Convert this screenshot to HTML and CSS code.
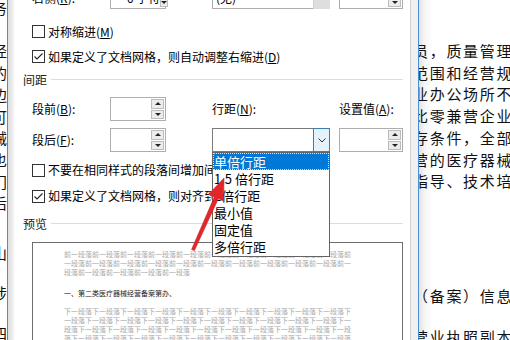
FILE: index.html
```html
<!DOCTYPE html>
<html>
<head>
    <meta charset="utf-8">
    <title>段落 - 行距</title>
    <link rel="stylesheet" href="styles.css">
</head>
<body>
<div class="screen">

    <div class="doc-left">
        <div class="doc-block">
            <div class="doc-line">务</div>
            <div class="doc-line">&nbsp;</div>
            <div class="doc-line">经</div>
            <div class="doc-line">的</div>
            <div class="doc-line">边</div>
            <div class="doc-line">可</div>
            <div class="doc-line">械</div>
            <div class="doc-line">也</div>
            <div class="doc-line">门</div>
            <div class="doc-line">后</div>
        </div>
        <div class="doc-block wide">
            <div class="doc-line">山</div>
            <div class="doc-line">涉</div>
            <div class="doc-line">四</div>
        </div>
    </div>
    <div class="doc-edge"></div>

    <div class="dialog">
        <div class="frame-left"></div>
        <div class="dialog-body">

            <div class="field-grid cut-row">
                <span class="label">右侧(<u>R</u>):</span>
                <div class="spin-box">
                    <span class="value indent">0 字符</span>
                    <div class="spinner"><span class="spin-btn up"></span><span class="spin-btn down"></span></div>
                </div>
                <div class="select-box plain">
                    <span class="value">(无)</span>
                    <span class="select-btn gray"></span>
                </div>
                <div class="spin-box narrow">
                    <div class="spinner"><span class="spin-btn up"></span><span class="spin-btn down"></span></div>
                </div>
            </div>

            <div class="check-row">
                <span class="checkbox"></span>
                <span>对称缩进(<u>M</u>)</span>
            </div>
            <div class="check-row">
                <span class="checkbox"><svg width="11" height="11" viewBox="0 0 11 11"><polyline points="1.5,5.5 4,8 9.5,2.5" fill="none" stroke="#222" stroke-width="1.1"/></svg></span>
                <span>如果定义了文档网格，则自动调整右缩进(<u>D</u>)</span>
            </div>

            <div class="group-title"><span>间距</span></div>

            <div class="field-grid spacing">
                <span class="label">段前(<u>B</u>):</span>
                <div class="spin-box">
                    <div class="spinner"><span class="spin-btn up"></span><span class="spin-btn down"></span></div>
                </div>
                <span class="label">行距(<u>N</u>):</span>
                <span class="label">设置值(<u>A</u>):</span>

                <span class="label">段后(<u>F</u>):</span>
                <div class="spin-box">
                    <div class="spinner"><span class="spin-btn up"></span><span class="spin-btn down"></span></div>
                </div>
                <div class="select-box open">
                    <span class="value"></span>
                    <span class="select-btn active">
                        <svg width="8" height="5" viewBox="0 0 8 5"><polyline points="0.5,0.5 4,4 7.5,0.5" fill="none" stroke="#333" stroke-width="1"/></svg>
                    </span>
                    <ul class="dropdown">
                        <li class="selected">单倍行距</li>
                        <li>1.5 倍行距</li>
                        <li>2倍行距</li>
                        <li>最小值</li>
                        <li>固定值</li>
                        <li>多倍行距</li>
                    </ul>
                </div>
                <div class="spin-box narrow">
                    <div class="spinner"><span class="spin-btn up"></span><span class="spin-btn down"></span></div>
                </div>
            </div>

            <div class="check-row tall">
                <span class="checkbox"></span>
                <span>不要在相同样式的段落间增加间距(<u>C</u>)</span>
            </div>
            <div class="check-row tall">
                <span class="checkbox"><svg width="11" height="11" viewBox="0 0 11 11"><polyline points="1.5,5.5 4,8 9.5,2.5" fill="none" stroke="#222" stroke-width="1.1"/></svg></span>
                <span>如果定义了文档网格，则对齐到网格(<u>W</u>)</span>
            </div>

            <div class="group-title preview-title"><span>预览</span></div>

            <div class="preview">
                <div class="prev-para">
                    <span>前一段落前一段落前一段落前一段落前一段落前一段落前一段落前一段落前一段落前一段落前</span>
                    <span>一段落前一段落前一段落前一段落前一段落前一段落前一段落前一段落前一段落前一段落前一</span>
                    <span>段落前一段落前一段落前一段落前一段落</span>
                </div>
                <div class="prev-para main">
                    <span>一、第二类医疗器械经营备案第办、</span>
                </div>
                <div class="prev-para after">
                    <span>下一段落下一段落下一段落下一段落下一段落下一段落下一段落下一段落下一段落下一段落下</span>
                    <span>一段落下一段落下一段落下一段落下一段落下一段落下一段落下一段落下一段落下一段落下一</span>
                    <span>段落下一段落下一段落下一段落下一段落下一段落下一段落下一段落下一段落下一段落下一段</span>
                    <span>落下一段落下一段落下一段落下一段落下一段落下一段落下一段落下一段落下一段落下一段落</span>
                </div>
            </div>

        </div>
        <div class="frame-right"></div>
    </div>
    <div class="doc-edge"></div>

    <div class="doc-right">
        <div class="doc-text">
            <div>员，质量管理</div>
            <div>范围和经营规</div>
            <div>业办公场所不</div>
            <div>比零兼营企业</div>
            <div>存条件，全部</div>
            <div>营的医疗器械</div>
            <div>指导、技术培</div>
        </div>
        <div class="doc-text wide">
            <div>（备案）信息</div>
            <div>营业执照副本</div>
        </div>
    </div>

    <svg class="callout" width="510" height="340" viewBox="0 0 510 340">
        <polygon points="224,178 223.5,201 218.3,198.8 194.4,250.6 191.6,249.4 214.3,197 208.5,194.5" fill="#e3262c" stroke="#c81e22" stroke-width="0.6" stroke-linejoin="round"/>
    </svg>
</div>
</body>
</html>
```

FILE: styles.css
```css
* { box-sizing: border-box; }
body { margin: 0; font-family: "Noto Sans CJK SC", "Microsoft YaHei", sans-serif; font-size: 12px; color: #000; background: #fff; }
u { text-decoration-thickness: 1px; text-underline-offset: 1px; }

.screen { position: relative; display: flex; width: 510px; height: 340px; overflow: hidden; background: #fff; }

/* document behind the dialog */
.doc-left { width: 7px; overflow: hidden; font-size: 15px; color: #111; }
.doc-left .doc-block { margin-top: -3px; line-height: 21.7px; }
.doc-left .doc-block.wide { margin-top: 19px; line-height: 40px; }
.doc-line { display: flex; justify-content: flex-end; white-space: nowrap; }
.doc-edge { width: 1px; background: #4a8fd6; }
.doc-right { flex: 1; overflow: hidden; background: linear-gradient(to right, #e2e2e2, #f6f6f6 6px, #fff 14px); font-size: 15px; color: #111; }
.doc-text { margin-left: -6px; padding-top: 40px; line-height: 21.7px; letter-spacing: 1.7px; white-space: nowrap; }
.doc-text.wide { padding-top: 83px; line-height: 41px; }

/* dialog */
.dialog { display: flex; width: 410px; }
.frame-left { width: 6px; background: linear-gradient(to right, #dedede, #f3f3f3); }
.frame-right { width: 8px; background: #f0f0f0; border-left: 1px solid #d2d2d2; }
.dialog-body { width: 396px; padding: 0 7px 0 9px; background: #fff; }

.field-grid { display: grid; grid-template-columns: 78px 102px 127px 64px; align-items: center; margin-left: 9px; }
.cut-row { margin-top: -14px; grid-auto-rows: 23px; }
.spacing { margin-top: 8px; grid-auto-rows: 24px; row-gap: 7px; }
.label { white-space: nowrap; line-height: 1; }

.spin-box { display: flex; align-items: stretch; width: 56px; height: 100%; border: 1px solid #adadad; background: #fff; }
.spin-box.narrow { width: 64px; }
.value { flex: 1; align-self: center; padding-left: 3px; line-height: 1; white-space: nowrap; }
.value.indent { padding-left: 16px; }
.spinner { display: flex; flex-direction: column; gap: 1px; width: 13px; margin: 1px 1px 1px auto; }
.spin-btn { flex: 1; display: flex; align-items: center; justify-content: center; border: 1px solid #bcbcbc; background: #ececec; }
.spin-btn::before { content: ""; border-left: 3px solid transparent; border-right: 3px solid transparent; }
.spin-btn.up::before { border-bottom: 3px solid #222; }
.spin-btn.down::before { border-top: 3px solid #222; }

.select-box { position: relative; display: flex; align-items: stretch; width: 118px; height: 100%; border: 1px solid #adadad; background: #fff; }
.select-box.open { border-color: #7a7a7a; }
.select-btn { display: flex; align-items: center; justify-content: center; width: 17px; margin: -1px -1px -1px 0; }
.select-btn.gray { background: #dedede; border-left: 1px solid #cfcfcf; }
.select-btn.active { background: #e5f1fb; border: 1px solid #3c7fb1; }

.dropdown { position: absolute; left: -1px; top: calc(100% + 1px); z-index: 2; width: 118px; margin: 0; padding: 0 0 1px; list-style: none; border: 1px solid #646464; background: #fff; font-size: 13px; }
.dropdown li { height: 17px; line-height: 17px; padding-left: 1px; white-space: nowrap; }
.dropdown li.selected { background: #0078d7; color: #fff; outline: 1px dotted #cfe3f7; outline-offset: -1px; }

.check-row { display: flex; align-items: center; gap: 3px; height: 25px; margin-left: 9px; white-space: nowrap; line-height: 1; }
.check-row:first-of-type { margin-top: 10px; }
.cut-row + .check-row { margin-top: 10px; }
.check-row.tall { height: 26px; }
.spacing + .check-row { margin-top: 5px; }
.checkbox { display: flex; align-items: center; justify-content: center; width: 13px; height: 13px; border: 1px solid #333; background: #fff; }

.group-title { display: flex; align-items: center; gap: 4px; height: 20px; color: #222; }
.group-title::after { content: ""; flex: 1; height: 1px; background: #dcdcdc; }
.preview-title { margin-top: 4px; }

.preview { width: 371px; height: 120px; margin: 9px 0 0 9px; padding: 7px 0 0 31px; border: 1px solid #6d6d6d; background: #fff; }
.prev-para { font-size: 7px; line-height: 8.8px; color: #a9a9a9; white-space: nowrap; }
.prev-para span { display: block; }
.prev-para.main { margin-top: 13px; color: #222; }
.prev-para.after { margin-top: 9px; }

.callout { position: absolute; left: 0; top: 0; pointer-events: none; z-index: 5; }
```
